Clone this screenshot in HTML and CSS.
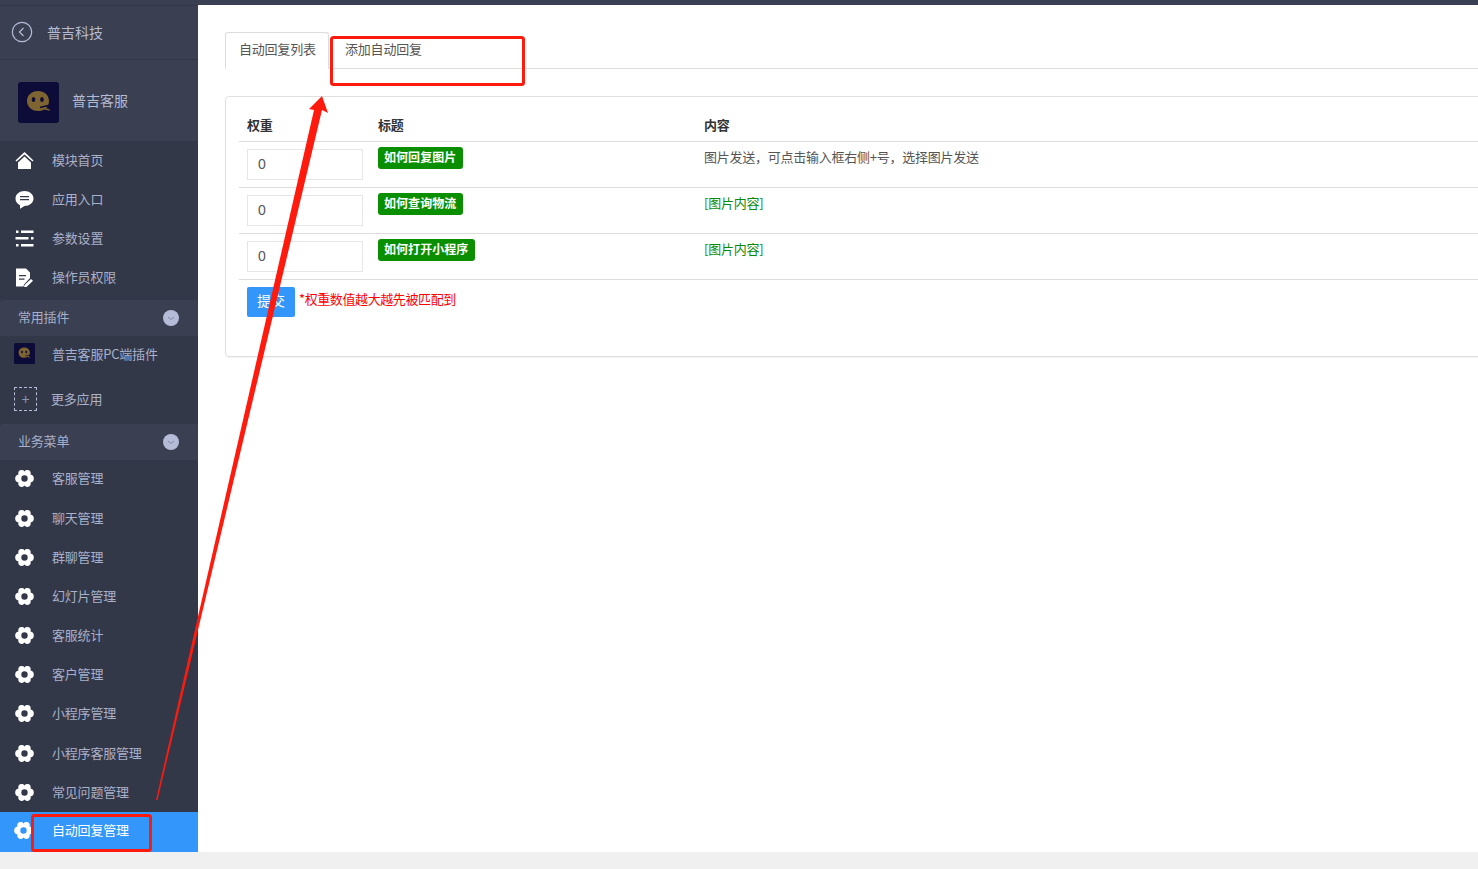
FILE: index.html
```html
<!DOCTYPE html>
<html lang="zh-CN">
<head>
<meta charset="utf-8">
<title>自动回复管理</title>
<link rel="stylesheet" href="styles.css">
</head>
<body>
<svg class="defs" width="0" height="0" aria-hidden="true">
  <symbol id="gear" viewBox="1 2 22 20">
    <path fill-rule="evenodd" d="M8.300 2.200a3.700 3.700 0 0 1 3.700 1.600a3.700 3.700 0 0 1 3.700-1.600a3.900 3.900 0 0 1 3.500 3.900q0 .9-.3 1.400a4.600 4.600 0 0 1 3.900 4.500a4.600 4.600 0 0 1-3.900 4.500q.3.5.3 1.400a3.900 3.900 0 0 1-3.500 3.900a3.700 3.700 0 0 1-3.700-1.600a3.700 3.700 0 0 1-3.700 1.600a3.900 3.900 0 0 1-3.500-3.900q0-.9.3-1.400A4.600 4.600 0 0 1 1.200 12a4.600 4.600 0 0 1 3.900-4.500q-.3-.5-.3-1.400a3.900 3.900 0 0 1 3.500-3.900zM12 8.300a3.700 3.700 0 1 0 0 7.400a3.700 3.700 0 0 0 0-7.400z"/>
  </symbol>
  <symbol id="logo" viewBox="0 0 41 41">
    <rect width="41" height="41" rx="3" fill="#0d0b38"/>
    <path fill="#7d6431" d="M20 9c6.500 0 11 4.300 11 10c0 2.300-.7 4-1.800 5.500l-1 1.500l3.800 1.700l-.3 1l-5.500-1.200c-1.900 1-4 1.500-6.200 1.500c-6.500 0-11-4.400-11-10S13.500 9 20 9z"/>
    <ellipse cx="15.500" cy="17.500" rx="1.800" ry="2.500" fill="#0d0b38"/>
    <ellipse cx="24" cy="17.500" rx="1.800" ry="2.500" fill="#0d0b38"/>
    <path d="M22 25.500l8-2" stroke="#0d0b38" stroke-width="1.300" fill="none"/>
  </symbol>
</svg>

<div class="topbar"></div>
<div class="layout">
  <aside class="sidebar">
    <header class="side-head">
      <svg class="back" viewBox="0 0 22 22"><circle cx="11" cy="11" r="9.700"/><path d="M12.500 7L8.500 11l4 4"/></svg>
      <span>普吉科技</span>
    </header>
    <div class="profile">
      <svg class="profile-logo"><use href="#logo"/></svg>
      <span>普吉客服</span>
    </div>
    <nav class="nav">
      <a class="item">
        <svg class="icon" viewBox="0 0 19 19"><path d="M9.500 1L.5 9.500l1 1L9.500 3.500l8 7 1-1zM3 11.500L9.500 5.500l6.500 6V18H3z"/></svg>
        <span>模块首页</span>
      </a>
      <a class="item">
        <svg class="icon" viewBox="0 0 19 19"><path fill-rule="evenodd" d="M9.500 1C14.500 1 18.500 4.200 18.500 8.500S14.500 16 9.500 16L5 18.800V15.200C2.200 14 .5 11.500.5 8.500C.5 4.200 4.500 1 9.500 1zM5 6v1.200h9V6zm0 3v1.200h9V9z"/></svg>
        <span>应用入口</span>
      </a>
      <a class="item">
        <svg class="icon" viewBox="0 0 19 19"><path d="M1 1.500h2.500v2.500H1zM6 1.500h12.500v2.500H6zM.5 8h13v2.500H.5zM16 8h2.500v2.500H16zM1 15h2.500v2.500H1zM6 15h12.500v2.500H6z"/></svg>
        <span>参数设置</span>
      </a>
      <a class="item">
        <svg class="icon" viewBox="0 0 19 19"><path fill-rule="evenodd" d="M1 .5H11l4 4V10l-6 6.500-.5 2H1zM4 7v1.300h7V7zm0 3.500v1.300h5.500v-1.300zM16 11l2 1.800-6.500 6.200-2.500.5.500-2.500z"/></svg>
        <span>操作员权限</span>
      </a>
    </nav>
    <div class="group">
      <span>常用插件</span>
      <svg class="toggle" viewBox="0 0 16 16"><circle cx="8" cy="8" r="8"/><path d="M5 7l3 2.500L11 7"/></svg>
    </div>
    <a class="plugin">
      <svg class="plugin-logo"><use href="#logo"/></svg>
      <span>普吉客服PC端插件</span>
    </a>
    <a class="more">
      <span class="plus">+</span>
      <span class="more-label">更多应用</span>
    </a>
    <div class="group">
      <span>业务菜单</span>
      <svg class="toggle" viewBox="0 0 16 16"><circle cx="8" cy="8" r="8"/><path d="M5 7l3 2.500L11 7"/></svg>
    </div>
    <nav class="nav">
      <a class="item"><svg class="icon"><use href="#gear"/></svg><span>客服管理</span></a>
      <a class="item"><svg class="icon"><use href="#gear"/></svg><span>聊天管理</span></a>
      <a class="item"><svg class="icon"><use href="#gear"/></svg><span>群聊管理</span></a>
      <a class="item"><svg class="icon"><use href="#gear"/></svg><span>幻灯片管理</span></a>
      <a class="item"><svg class="icon"><use href="#gear"/></svg><span>客服统计</span></a>
      <a class="item"><svg class="icon"><use href="#gear"/></svg><span>客户管理</span></a>
      <a class="item"><svg class="icon"><use href="#gear"/></svg><span>小程序管理</span></a>
      <a class="item"><svg class="icon"><use href="#gear"/></svg><span>小程序客服管理</span></a>
      <a class="item"><svg class="icon"><use href="#gear"/></svg><span>常见问题管理</span></a>
      <a class="item active"><svg class="icon"><use href="#gear"/></svg><span>自动回复管理</span></a>
    </nav>
  </aside>

  <main class="main">
    <ul class="tabs">
      <li class="tab current">自动回复列表</li>
      <li class="tab">添加自动回复</li>
    </ul>
    <section class="panel">
      <table class="table">
        <thead>
          <tr><th class="col-weight">权重</th><th class="col-title">标题</th><th>内容</th></tr>
        </thead>
        <tbody>
          <tr>
            <td><input class="weight" type="text" value="0"></td>
            <td><span class="badge">如何回复图片</span></td>
            <td>图片发送，可点击输入框右侧+号，选择图片发送</td>
          </tr>
          <tr>
            <td><input class="weight" type="text" value="0"></td>
            <td><span class="badge">如何查询物流</span></td>
            <td class="green">[图片内容]</td>
          </tr>
          <tr>
            <td><input class="weight" type="text" value="0"></td>
            <td><span class="badge">如何打开小程序</span></td>
            <td class="green">[图片内容]</td>
          </tr>
        </tbody>
      </table>
      <div class="actions">
        <button class="submit" type="button">提交</button>
        <span class="note">*权重数值越大越先被匹配到</span>
      </div>
    </section>
  </main>
</div>
<div class="footer-band"></div>

<svg class="annotation" viewBox="0 0 1478 869">
  <path class="arrow" d="M322 96L328 113L322 110L157.500 800H156L314 110L309 109z"/>
  <rect class="mark" x="331.500" y="37.500" width="192" height="47" rx="2"/>
  <rect class="mark" x="32.500" y="815.500" width="118" height="35" rx="2"/>
</svg>
</body>
</html>
```

FILE: styles.css
```css
* { box-sizing: border-box; }

html, body {
  margin: 0;
  height: 869px;
  overflow: hidden;
  background: #fff;
}

body {
  position: relative;
  display: flex;
  flex-direction: column;
  font-family: "Noto Sans CJK SC", "Liberation Sans", sans-serif;
  font-size: 13px;
  letter-spacing: -.2px;
  color: #555;
}

.defs { position: absolute; }

.topbar {
  height: 5px;
  flex: none;
  background: #3a3f51;
}

.layout {
  display: flex;
  height: 847px;
  flex: none;
}

.footer-band {
  flex: 1;
  background: #f0f0f0;
}

/* Sidebar */
.sidebar {
  width: 198px;
  flex: none;
  background: #333849;
  color: #a8b0ca;
  overflow: hidden;
}

.side-head {
  display: flex;
  align-items: center;
  gap: 14px;
  height: 55px;
  padding-left: 11px;
  padding-bottom: 1px;
  background: #3a3f51;
  border-bottom: 1px solid #31364a;
  border-top: 1px solid #31364a;
  font-size: 14px;
  letter-spacing: 0;
  color: #b4bbd2;
}

.back {
  width: 22px;
  height: 22px;
  fill: none;
  stroke: #b4bcd8;
  stroke-width: 1.2;
}

.profile {
  display: flex;
  align-items: center;
  gap: 13px;
  height: 81px;
  padding-left: 18px;
  padding-bottom: 2px;
  background: #3a3f51;
  font-size: 14px;
  letter-spacing: 0;
  color: #b4bbd2;
}

.profile-logo {
  width: 41px;
  height: 41px;
  margin-top: 5px;
}

.item {
  display: flex;
  align-items: center;
  gap: 18px;
  height: 39.2px;
  padding-left: 15px;
  padding-bottom: 3px;
}

.icon {
  width: 19px;
  height: 19px;
  flex: none;
  margin-top: 2px;
  fill: #fff;
}

.item.active {
  background: #3296fa;
  color: #fff;
  padding-bottom: 5px;
  height: 40px;
}

.item.active .icon { margin-left: -1px; margin-right: 1px; }

.group {
  display: flex;
  align-items: center;
  justify-content: space-between;
  height: 36px;
  margin-top: 2px;
  padding: 0 19px 3px 18px;
  background: #3a3f51;
  border-radius: 3px 3px 0 0;
}

.toggle {
  width: 16px;
  height: 16px;
  flex: none;
  margin-top: 3px;
}

.toggle circle { fill: #b4bcd8; }

.toggle path {
  fill: none;
  stroke: #7f88a8;
  stroke-width: 1;
}

.plugin {
  display: flex;
  align-items: center;
  gap: 17px;
  height: 36px;
  padding-left: 14px;
}

.plugin-logo {
  width: 21px;
  height: 21px;
}

.more {
  display: flex;
  align-items: center;
  gap: 14px;
  height: 50px;
  padding-left: 14px;
  padding-top: 5px;
}

.more-label { margin-bottom: 2px; }

.plus {
  display: flex;
  align-items: center;
  justify-content: center;
  width: 23px;
  height: 24px;
  border: 1px dashed #b4bcd8;
  font-family: "Liberation Sans", sans-serif;
  font-size: 14px;
  color: #8e96ad;
}

/* Main */
.main {
  flex: 1;
  min-width: 0;
  padding: 27px 0 0 27px;
  overflow: hidden;
}

.tabs {
  display: flex;
  width: 1400px;
  height: 37px;
  margin: 0;
  padding: 0;
  list-style: none;
  border-bottom: 1px solid #ddd;
}

.tab {
  height: 36px;
  padding: 0 14px 0 15px;
  line-height: 31px;
  white-space: nowrap;
  border: 1px solid transparent;
  border-radius: 3px 3px 0 0;
}

.tab.current {
  width: 104px;
  padding: 0 13px;
  height: 37px;
  background: #fff;
  border-color: #ddd #ddd #fff;
}

.panel {
  width: 1400px;
  height: 261px;
  margin-top: 27px;
  padding: 8px 13px 0;
  border: 1px solid #e0e0e0;
  border-radius: 4px;
  box-shadow: 0 1px 1px rgba(0, 0, 0, .05);
}

.table {
  width: 100%;
  border-collapse: collapse;
  table-layout: fixed;
}

.table th {
  height: 36px;
  padding: 4px 8px 0;
  text-align: left;
  font-size: 13px;
  font-weight: 700;
  color: #333;
  border-bottom: 1px solid #ddd;
}

.col-weight { width: 131px; }
.col-title { width: 326px; }

.table td {
  height: 46px;
  padding: 7px 8px 0;
  vertical-align: top;
  line-height: 15px;
  letter-spacing: -.25px;
  border-bottom: 1px solid #ddd;
}

.weight {
  display: block;
  width: 116px;
  height: 31px;
  padding: 0 10px;
  border: 1px solid #e6e6e6;
  outline: none;
  font-family: "Liberation Sans", sans-serif;
  font-size: 14px;
  color: #555;
}

.badge {
  display: block;
  width: fit-content;
  height: 22px;
  margin-top: -2px;
  padding: 0 7px 0 6px;
  line-height: 19px;
  font-size: 12px;
  font-weight: 700;
  letter-spacing: .05px;
  color: #fff;
  background: #0a8f00;
  border-radius: 3px;
}

.green { color: #0a8a0a; }

.actions {
  display: flex;
  align-items: center;
  gap: 4px;
  padding: 7px 0 0 8px;
}

.submit {
  width: 48px;
  height: 30px;
  padding: 0 0 3px;
  border: 0;
  border-radius: 2px;
  background: #3296fa;
  color: #fff;
  font-family: inherit;
  font-size: 14px;
  letter-spacing: 0;
}

.note {
  position: relative;
  top: -3px;
  letter-spacing: -.4px;
  color: #f00;
}

/* Annotation drawn over the screenshot */
.annotation {
  position: absolute;
  inset: 0;
  width: 1478px;
  height: 869px;
  pointer-events: none;
}

.arrow { fill: #ff1a0e; }

.mark {
  fill: none;
  stroke: #ff1a0e;
  stroke-width: 3;
}
```
